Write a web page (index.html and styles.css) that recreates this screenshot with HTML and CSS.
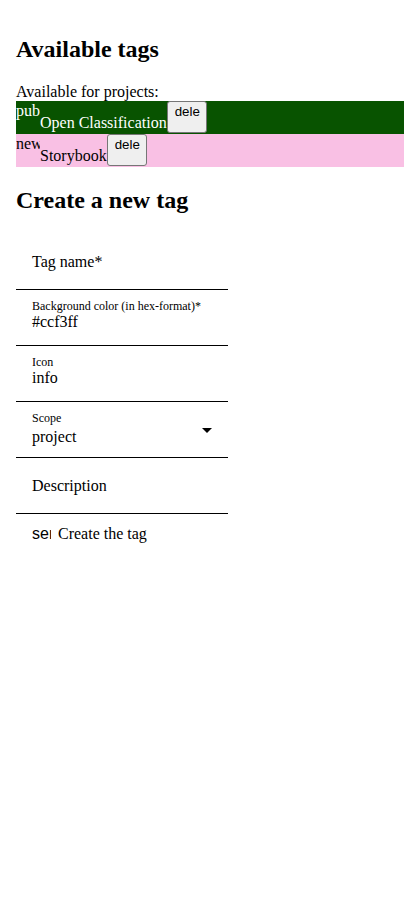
FILE: index.html
```html
<!DOCTYPE html>
<html lang="en">
<head>
<meta charset="utf-8">
<title>Tags</title>
<link rel="stylesheet" href="styles.css">
</head>
<body>
<main class="page">
  <h2 class="title">Available tags</h2>
  <div class="scope-caption">Available for projects:</div>
  <div class="tag tag-green">
    <span class="tag-icon">pub</span>
    <span class="tag-name">Open Classification</span>
    <button class="del" type="button"><span class="del-text">dele</span></button>
  </div>
  <div class="tag tag-pink">
    <span class="tag-icon">new</span>
    <span class="tag-name">Storybook</span>
    <button class="del" type="button"><span class="del-text">dele</span></button>
  </div>

  <h2 class="title">Create a new tag</h2>
  <form class="form">
    <div class="field">
      <div class="placeholder">Tag name*</div>
    </div>
    <div class="field">
      <div class="float-label">Background color (in hex-format)*</div>
      <div class="value">#ccf3ff</div>
    </div>
    <div class="field">
      <div class="float-label">Icon</div>
      <div class="value">info</div>
    </div>
    <div class="field field-select">
      <div class="select-text">
        <div class="float-label">Scope</div>
        <div class="value value-select">project</div>
      </div>
      <span class="arrow"></span>
    </div>
    <div class="field">
      <div class="placeholder">Description</div>
    </div>
    <div class="submit">
      <span class="submit-icon">send</span>
      <span class="submit-label">Create the tag</span>
    </div>
  </form>
</main>
</body>
</html>
```

FILE: styles.css
```css
html, body {
  margin: 0;
  padding: 0;
  background: #ffffff;
}

body {
  font-family: "Liberation Serif", "Times New Roman", serif;
  font-size: 16px;
  color: #000000;
}

.page {
  padding: 16px 16px 0 16px;
}

.title {
  font-size: 24px;
  font-weight: bold;
  margin: 20px 0;
  line-height: normal;
}

.scope-caption {
  line-height: 18px;
}

.tag {
  display: flex;
  align-items: flex-start;
  height: 33px;
}

.tag-green {
  background: #085300;
  color: #ffffff;
}

.tag-pink {
  background: #f9c0e4;
  color: #000000;
}

.tag-icon {
  width: 24px;
  overflow: hidden;
  white-space: nowrap;
  line-height: 18px;
  margin-top: 1px;
}

.tag-name {
  line-height: 18px;
  margin-top: 13px;
  white-space: nowrap;
}

.del {
  appearance: none;
  width: 40px;
  height: 32px;
  margin: 0;
  padding: 2px 7px 0 7px;
  border: 1px solid #767676;
  border-radius: 3px;
  background: #efefef;
  color: #000000;
  font-family: "Liberation Sans", Arial, sans-serif;
  font-size: 13.33px;
  display: flex;
  align-items: flex-start;
  justify-content: flex-start;
  overflow: hidden;
}

.del-text {
  white-space: nowrap;
  line-height: normal;
}

.form {
  width: 212px;
}

.field {
  height: 55px;
  border-bottom: 1px solid #000000;
  padding-left: 16px;
}

.placeholder {
  line-height: 18px;
  padding-top: 19px;
}

.float-label {
  font-size: 12px;
  line-height: 14px;
  padding-top: 9px;
  white-space: nowrap;
}

.value {
  line-height: 18px;
  margin-top: 0;
}

.value-select {
  margin-top: 3px;
}

.field-select {
  display: flex;
  justify-content: space-between;
  align-items: flex-start;
  padding-right: 16px;
}

.arrow {
  width: 0;
  height: 0;
  border-left: 5px solid transparent;
  border-right: 5px solid transparent;
  border-top: 5px solid #000000;
  margin-top: 26px;
}

.submit {
  display: flex;
  align-items: flex-start;
  padding-left: 16px;
  padding-top: 10px;
}

.submit-icon {
  width: 19px;
  overflow: hidden;
  white-space: nowrap;
  font-family: "Liberation Sans", Arial, sans-serif;
  font-size: 16px;
  line-height: 18px;
  margin-right: 7px;
  margin-top: 1px;
}

.submit-label {
  line-height: 18px;
  margin-top: 1px;
}
```
